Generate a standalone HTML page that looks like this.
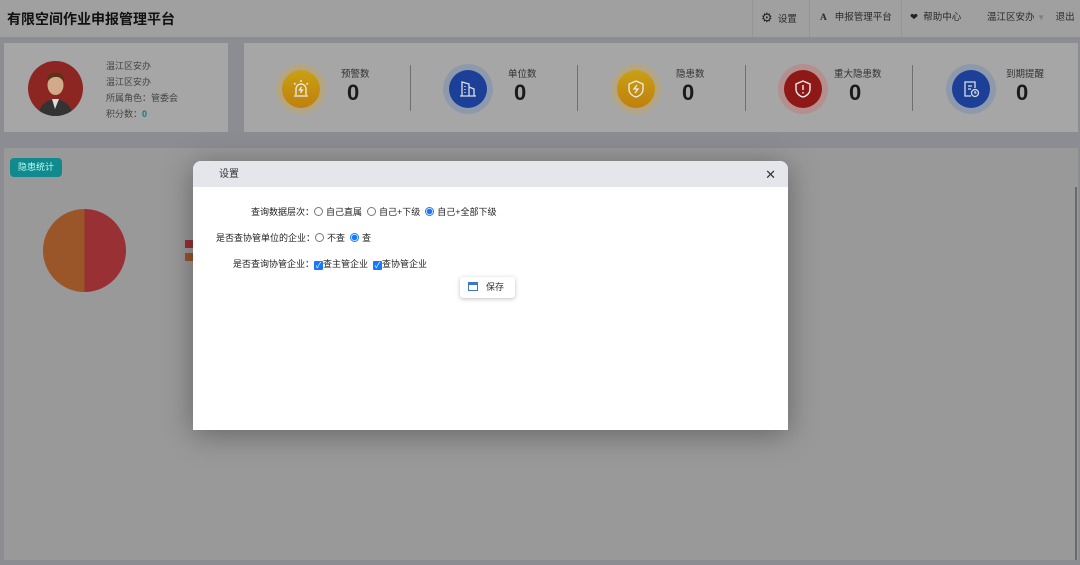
<!DOCTYPE html>
<html><head><meta charset="utf-8"><style>
*{margin:0;padding:0;box-sizing:border-box}
body{width:1080px;height:565px;background:#8b8d92;font-family:"Liberation Sans","Noto Sans CJK SC",sans-serif;position:relative;overflow:hidden;font-size:10px;color:#333}
.a{position:absolute}
.hdr{left:0;top:0;width:1080px;height:37px;background:#a0a0a0}
.t{left:7px;top:9px;font-size:14px;font-weight:bold;color:#111}
.nav{top:0;height:37px;line-height:36px;font-size:9.5px;color:#2a2a2a;border-left:1px solid #959595}
.p{background:#a6a6a6}
.stat{width:50px;height:50px;border-radius:50%}
.in{left:6px;top:6px;width:38px;height:38px;border-radius:50%}
.in svg{position:absolute;left:9px;top:9px}
.lbl{font-size:9.5px;color:#333}
.num{font-size:22px;font-weight:bold;color:#1a1a1a}
.dv{width:1px;height:46px;top:65px;background:#6f6f6f}
.dlg{left:193px;top:161px;width:595px;height:269px;background:#fff;border-radius:8px 8px 0 0;box-shadow:0 4px 30px rgba(0,0,0,.35);overflow:hidden}
.dh{height:26px;background:#e4e6ec;font-size:10px;line-height:27px;padding-left:26px;color:#333}
.row{font-size:9px;color:#222;position:absolute;white-space:nowrap}
.rd{display:inline-block;width:9px;height:9px;border:1px solid #777;border-radius:50%;vertical-align:-1px;margin-right:3px}
.rd.on{border-color:#1677ff;background:radial-gradient(#1677ff 0 2.5px,#fff 3px)}
.cb{display:inline-block;width:9px;height:9px;background:#1677ff;border-radius:1px;vertical-align:-1px;color:#fff;font-size:8px;line-height:9px;text-align:center}
</style></head><body>
<div class="a hdr"></div>
<div class="a t">有限空间作业申报管理平台</div>
<div class="a nav" style="left:752px;width:57px;padding-left:8px"><span style="font-size:13px;color:#222">⚙</span>&nbsp; 设置</div>
<div class="a nav" style="left:809px;width:92px;padding-left:10px"><b style="font-family:'Liberation Serif',serif">A</b>&nbsp;&nbsp; 申报管理平台</div>
<div class="a nav" style="left:901px;width:80px;padding-left:8px"><span style="color:#222">❤</span>&nbsp; 帮助中心</div>
<div class="a nav" style="left:981px;border:none;padding-left:6px">温江区安办 <span style="color:#7a7f8a;font-size:8px">▼</span>&nbsp;&nbsp;&nbsp; 退出</div>

<div class="a p" style="left:4px;top:43px;width:224px;height:89px"></div>
<div class="a" style="left:28px;top:61px;width:55px;height:55px;border-radius:50%;background:#8b2622;overflow:hidden">
<svg width="55" height="55" viewBox="0 0 55 55"><path d="M10 55 Q12 40 27 38 Q43 40 45 55Z" fill="#333"/><path d="M24 38 L27 48 L31 38Z" fill="#ddd"/><ellipse cx="27.5" cy="24" rx="8" ry="10" fill="#d2a98a"/><path d="M19 22 Q19 11 28 12 Q37 12 36 22 Q33 15 27 16 Q22 16 19 22Z" fill="#5a3218"/></svg></div>
<div class="a" style="left:106px;top:58px;font-size:9px;color:#444;line-height:16px">温江区安办<br>温江区安办<br>所属角色：管委会<br>积分数：<b style="color:#0e7c86">0</b></div>

<div class="a p" style="left:244px;top:43px;width:834px;height:89px"></div>
<div class="a stat" style="left:276px;top:64px;background:#b4a685"><div class="a in" style="background:linear-gradient(#c9a014,#c0800c)"><svg width="20" height="20" viewBox="0 0 20 20" fill="none" stroke="#eee" stroke-width="1.3"><path d="M5 16V10a5 5 0 0110 0v6M3 17h14M10 1v2M3 4l1.5 1.5M17 4l-1.5 1.5"/><path d="M10.5 8L8.5 11h3l-2 3" /></svg></div></div>
<div class="a stat" style="left:443px;top:64px;background:#8e9aac"><div class="a in" style="background:#1c3f98"><svg width="20" height="20" viewBox="0 0 20 20" fill="none" stroke="#ddd" stroke-width="1.3"><path d="M4 17V3l7 2v12M11 8l5 2v7M2 17h16M7 7v1M7 10v1M7 13v1"/></svg></div></div>
<div class="a stat" style="left:611px;top:64px;background:#b4a685"><div class="a in" style="background:linear-gradient(#c9a014,#c0800c)"><svg width="20" height="20" viewBox="0 0 20 20" fill="none" stroke="#eee" stroke-width="1.3"><path d="M10 2l7 3v5c0 4-3 7-7 8-4-1-7-4-7-8V5z"/><path d="M11 6l-3 4h4l-3 4"/></svg></div></div>
<div class="a stat" style="left:778px;top:64px;background:#b48f8f"><div class="a in" style="background:#8e1816"><svg width="20" height="20" viewBox="0 0 20 20" fill="none" stroke="#eee" stroke-width="1.4"><path d="M10 2l7 3v5c0 4-3 7-7 8-4-1-7-4-7-8V5z"/><path d="M10 6v5M10 13v1.5"/></svg></div></div>
<div class="a stat" style="left:946px;top:64px;background:#8e9aac"><div class="a in" style="background:#1c3f98"><svg width="20" height="20" viewBox="0 0 20 20" fill="none" stroke="#ddd" stroke-width="1.3"><path d="M10 17H4V3h10v6M7 7h4M7 10h3"/><circle cx="14" cy="14" r="3.5"/><path d="M14 12v2h1.5"/></svg></div></div>
<div class="a lbl" style="left:341px;top:66px">预警数</div><div class="a num" style="left:347px;top:80px">0</div>
<div class="a lbl" style="left:508px;top:66px">单位数</div><div class="a num" style="left:514px;top:80px">0</div>
<div class="a lbl" style="left:676px;top:66px">隐患数</div><div class="a num" style="left:682px;top:80px">0</div>
<div class="a lbl" style="left:834px;top:66px">重大隐患数</div><div class="a num" style="left:849px;top:80px">0</div>
<div class="a lbl" style="left:1006px;top:66px">到期提醒</div><div class="a num" style="left:1016px;top:80px">0</div>
<div class="a dv" style="left:410px"></div><div class="a dv" style="left:577px"></div><div class="a dv" style="left:745px"></div><div class="a dv" style="left:912px"></div>

<div class="a" style="left:4px;top:148px;width:1074px;height:412px;background:#999"></div>
<div class="a" style="left:1075px;top:187px;width:2px;height:373px;background:#6a6a6a"></div>
<div class="a" style="left:10px;top:158px;width:52px;height:19px;background:#108a8f;border-radius:4px;color:#bfe;font-size:9px;line-height:19px;text-align:center">隐患统计</div>
<div class="a" style="left:43px;top:209px;width:83px;height:83px;border-radius:50%;background:linear-gradient(90deg,#9a5528 50%,#983034 50%)"></div>
<div class="a" style="left:185px;top:240px;width:8px;height:8px;background:#983034"></div>
<div class="a" style="left:185px;top:253px;width:8px;height:8px;background:#9a5528"></div>

<div class="a dlg">
<div class="dh">设置<span style="position:absolute;right:12px;top:0;font-size:13px;color:#333">✕</span></div>
<div class="row" style="left:58px;top:44px">查询数据层次：<span class="rd"></span>自己直属 &nbsp;<span class="rd"></span>自己+下级 &nbsp;<span class="rd on"></span>自己+全部下级</div>
<div class="row" style="left:23px;top:70px">是否查协管单位的企业：<span class="rd"></span>不查 &nbsp;<span class="rd on"></span>查</div>
<div class="row" style="left:40px;top:96px">是否查询协管企业：<span class="cb">✓</span>查主管企业 &nbsp;<span class="cb">✓</span>查协管企业</div>
<div class="a" style="left:267px;top:116px;width:55px;height:21px;border-radius:3px;box-shadow:0 1px 4px rgba(0,0,0,.25);font-size:9px;line-height:21px;color:#333;padding-left:8px"><span style="display:inline-block;width:10px;height:9px;border:1px solid #3a77c8;border-top-width:3px;vertical-align:-1px;margin-right:8px"></span>保存</div>
</div>
</body></html>
